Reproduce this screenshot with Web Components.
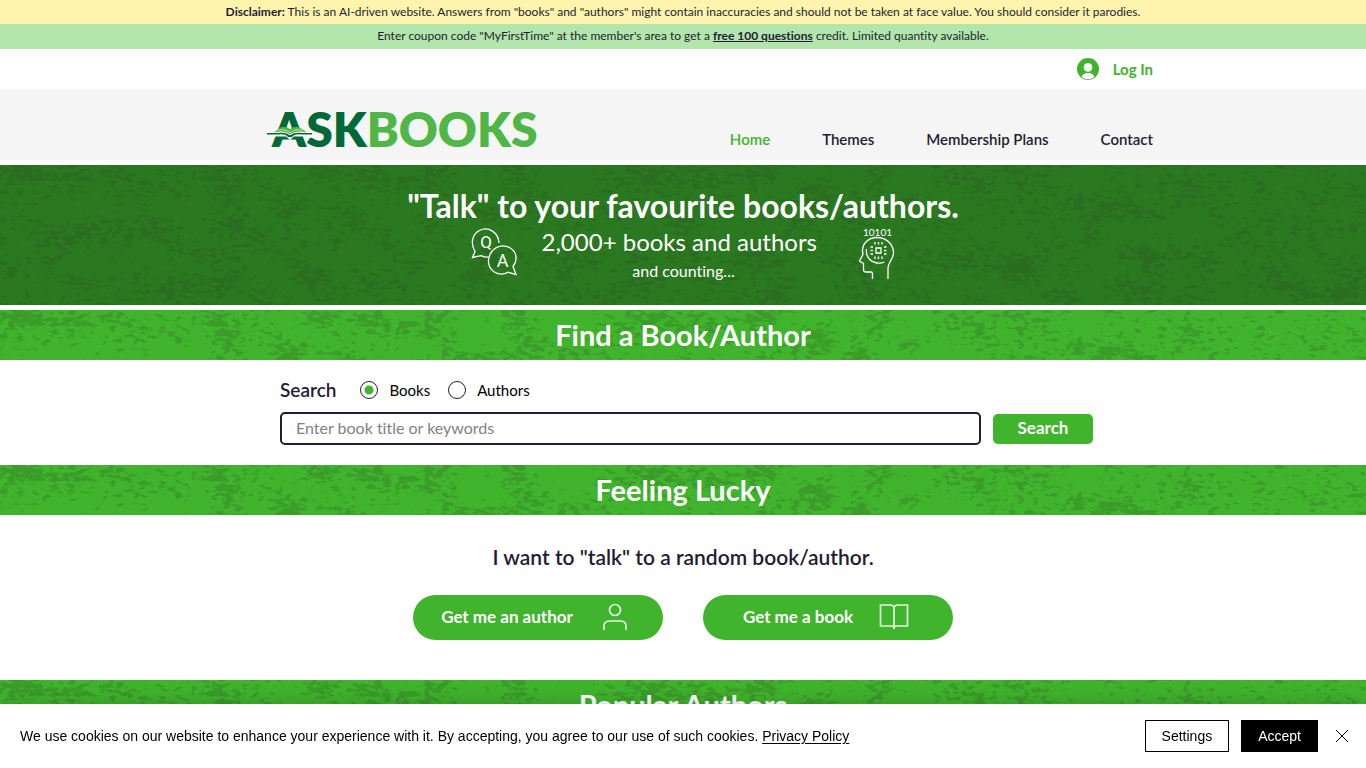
<!DOCTYPE html>
<html lang="en">
<head>
<meta charset="utf-8">
<meta name="viewport" content="width=device-width, initial-scale=1">
<title>AskBooks</title>
<style>
    body {
        margin: 0;
        background: #fff;
        color: #241c34;
        font-family: Lato, "Open Sans", sans-serif;
        font-variant-ligatures: none;
        --green: #40b42d;
        --ink: #241c34;
    }
</style>
</head>
<body>
<ask-page></ask-page>

<script>
class NoticeBar extends HTMLElement {
    connectedCallback() {
        this.attachShadow({ mode: 'open' });
        this.shadowRoot.innerHTML = `
            <style>
                :host {
                    display: block;
                    padding: 0 16px;
                    background: #fff4ae;
                    font-size: 12px;
                    font-weight: 400;
                    line-height: 24px;
                    text-align: center;
                }
                :host([tone="green"]) { padding-bottom: 1px; background: #b2e6aa; }
                ::slotted(strong), ::slotted(a) { font-weight: 700; color: inherit; }
            </style>
            <slot></slot>
        `;
    }
}

class LoginBar extends HTMLElement {
    connectedCallback() {
        this.attachShadow({ mode: 'open' });
        this.shadowRoot.innerHTML = `
            <style>
                :host { display: block; }
                .inner {
                    box-sizing: border-box;
                    max-width: 980px;
                    height: 40px;
                    margin: 0 auto;
                    padding: 0 20px;
                    display: flex;
                    justify-content: flex-end;
                    align-items: center;
                }
                button {
                    display: flex;
                    align-items: center;
                    gap: 14px;
                    padding: 0;
                    border: 0;
                    background: none;
                    color: var(--green);
                    font: 700 15px/20px Lato, sans-serif;
                    cursor: pointer;
                }
            </style>
            <div class="inner">
                <button type="button">
                    <svg width="22" height="22" viewBox="0 0 22 22" aria-hidden="true">
                        <circle cx="11" cy="11" r="11" fill="#40b42d"/>
                        <circle cx="11" cy="9.4" r="4.3" fill="#fff"/>
                        <path d="M4.600 18.900C5.600 15.800 8 14.900 11 14.900s5.400.9 6.400 4C15.500 20.400 13.300 21.200 11 21.200s-4.500-.8-6.400-2.300z" fill="#fff"/>
                    </svg>
                    Log In
                </button>
            </div>
        `;
    }
}

class SiteLogo extends HTMLElement {
    connectedCallback() {
        this.attachShadow({ mode: 'open' });
        this.shadowRoot.innerHTML = `
            <style>
                :host { display: block; }
                a { display: block; height: 40px; }
                svg { display: block; overflow: visible; }
                text { font: 800 48px Lato, sans-serif; }
            </style>
            <a href="#" aria-label="AskBooks home">
                <svg width="271" height="40" viewBox="0 0 271 40">
                    <text x="5" y="38" fill="#006937">ASK<tspan fill="#50b648">BOOKS</tspan></text>
                    <path d="M0 22.500h12c2-3 7-4.500 11-1.500 4-3 9-1.500 11 1.500h11v5H27l-4 3.500-4-3.500H0z" fill="#f5f5f5"/>
                    <path d="M0 24h12c4-.5 8 0 10 2h2c2-2 6-2.500 10-2h11v1.500H34c-4-.5-7 0-9 2.500h-4c-2-2.500-5-3-9-2.500H0z" fill="#006937"/>
                    <path d="M7 23.500 13.500 18.500c4-1 7-.5 9.500 2 2.500-2.500 5.500-3 9.500-2l7.500 5c-6-1.500-13-2-17 2-4-4-10-3.500-16-2z" fill="#50b648"/>
                    <path d="M11 21.500c5-1.500 9-.5 12 2.500 3-3 7-4 12-2.500" fill="none" stroke="#e7f5df" stroke-width=".7"/>
                </svg>
            </a>
        `;
    }
}

class SiteHeader extends HTMLElement {
    connectedCallback() {
        this.attachShadow({ mode: 'open' });
        this.shadowRoot.innerHTML = `
            <style>
                :host { display: block; background: #f5f5f5; }
                .inner {
                    box-sizing: border-box;
                    max-width: 980px;
                    margin: 0 auto;
                    padding: 20px 20px 11px 74px;
                    display: flex;
                    justify-content: space-between;
                    align-items: flex-end;
                }
                nav { display: flex; gap: 52px; }
                a {
                    color: var(--ink);
                    font-size: 15px;
                    font-weight: 600;
                    line-height: 20px;
                    text-decoration: none;
                }
                a[aria-current] { color: var(--green); }
            </style>
            <header class="inner">
                <site-logo></site-logo>
                <nav>
                    <a href="#" aria-current="page">Home</a>
                    <a href="#">Themes</a>
                    <a href="#">Membership Plans</a>
                    <a href="#">Contact</a>
                </nav>
            </header>
        `;
    }
}

// Green strip with a mottled texture behind whatever is slotted in
class TexturedBand extends HTMLElement {
    connectedCallback() {
        this.attachShadow({ mode: 'open' });
        this.shadowRoot.innerHTML = `
            <style>
                :host {
                    display: block;
                    position: relative;
                    overflow: hidden;
                    background: var(--green);
                    color: #fff;
                    text-align: center;
                }
                :host([dark]) { background: #2a7820; }
                .texture { position: absolute; inset: 0; width: 100%; height: 100%; }
                .content { position: relative; }
                ::slotted(h2) {
                    margin: 0;
                    font-size: 29px;
                    font-weight: 700;
                    line-height: 50px;
                }
            </style>
            <svg class="texture" aria-hidden="true">
                <filter id="grain" x="0" y="0" width="100%" height="100%" color-interpolation-filters="sRGB">
                    <feTurbulence type="fractalNoise" baseFrequency=".024 .036" numOctaves="2" seed="5" result="patches"/>
                    <feTurbulence type="fractalNoise" baseFrequency=".12 .24" numOctaves="3" seed="3" result="fine"/>
                    <feComposite in="patches" in2="fine" operator="arithmetic" k2=".45" k3=".55"/>
                    <feColorMatrix values="0 0 0 0 .18  0 0 0 0 .32  0 0 0 0 .16  14 0 0 0 -7.500"/>
                    <feColorMatrix values="0 0 0 0 .16  0 0 0 0 .28  0 0 0 0 .12  0 0 0 .22 0"/>
                </filter>
                <rect width="100%" height="100%" filter="url(#grain)"/>
            </svg>
            <div class="content"><slot></slot></div>
        `;
    }
}

class HeroIntro extends HTMLElement {
    connectedCallback() {
        this.attachShadow({ mode: 'open' });
        this.shadowRoot.innerHTML = `
            <style>
                :host { display: block; box-sizing: border-box; min-height: 140px; padding: 21px 16px 0; }
                h1, p { margin: 0; }
                h1 { font-size: 32px; font-weight: 700; line-height: 40px; }
                .row {
                    display: grid;
                    grid-template-columns: 46px 284px 45px;
                    justify-content: center;
                    column-gap: 24px;
                    align-items: start;
                }
                .count { font-size: 24px; line-height: 32px; text-align: left; }
                .more { font-size: 16px; line-height: 26px; }
                svg { justify-self: end; margin-top: 2px; fill: none; stroke: #fff; stroke-width: 1.3; overflow: visible; }
                svg text { fill: #fff; stroke: none; }
            </style>
            <h1>"Talk" to your favourite books/authors.</h1>
            <div class="row">
                <svg width="46" height="48" viewBox="1 0 46 48" aria-hidden="true">
                    <path d="M17.500 29.200c-3 .1-5-.3-7.500-1.600L1.500 29.500l2.500-6C-1 15 1.500 6 8.500 2.500c9-4.500 19 2 19.500 12.500"/>
                    <path d="M42 38.500l3 8-8-2.300c-7 4-15.500 1-18.500-6-3-7.500 1-16.500 9-19.500 8-2.500 16.500 2 17.500 10 .5 4-.7 7-3 9.800z"/>
                    <text x="15" y="20" text-anchor="middle" font-family="Roboto, sans-serif" font-size="17">Q</text>
                    <text x="31.500" y="38.500" text-anchor="middle" font-family="Roboto, sans-serif" font-size="18">A</text>
                </svg>
                <div>
                    <p class="count">2,000+ books and authors</p>
                    <p class="more">and counting...</p>
                </div>
                <svg width="35" height="52" viewBox="1 1 35 52" aria-hidden="true">
                    <text x="18.500" y="9" text-anchor="middle" font-size="10">10101</text>
                    <path d="M13.500 52v-5.500q0-1.500-1.500-1.500H7q-2.500 0-2.500-2.500v-6L1 34.500q-.5-.5 0-1.500l3-5.500C1.500 17 9.500 10.500 18 10.500c9.500 0 16.500 7 16.500 15.500 0 6-5.500 9-5.500 15.500V52"/>
                    <path d="M7.500 22c-1 8 4 13 10.500 14 3 .5 5 .2 7.500-1"/>
                    <path d="M17 21h5v5h-5zM16 15v2.500M19.500 15v2.500M23 15v2.500M16 29.500V32M19.500 29.500V32M23 29.500V32M11.500 20H14M11.500 23.500H14M11.500 27H14M25 20h2.500M25 23.500h2.500M25 27h2.500"/>
                </svg>
            </div>
        `;
    }
}

class BookSearch extends HTMLElement {
    connectedCallback() {
        this.attachShadow({ mode: 'open' });
        this.shadowRoot.innerHTML = `
            <style>
                :host { display: block; }
                form {
                    box-sizing: border-box;
                    max-width: 846px;
                    margin: 0 auto;
                    padding: 18px 13px 20px 20px;
                }
                .options {
                    display: flex;
                    align-items: center;
                    min-height: 24px;
                    margin-bottom: 10px;
                }
                .title { margin-right: 24px; font-size: 19px; font-weight: 600; line-height: 22px; }
                .choice {
                    display: flex;
                    align-items: center;
                    gap: 11px;
                    margin-right: 18px;
                    color: #000;
                    font-size: 15px;
                    line-height: 24px;
                }
                input[type="radio"] {
                    appearance: none;
                    box-sizing: border-box;
                    width: 18px;
                    height: 18px;
                    margin: 0;
                    border: 1px solid var(--ink);
                    border-radius: 50%;
                }
                input[type="radio"]:checked {
                    background: radial-gradient(circle, var(--green) 4px, transparent 5px);
                }
                .line { display: flex; align-items: center; gap: 12px; }
                .field {
                    box-sizing: border-box;
                    flex: 1;
                    min-width: 0;
                    height: 33px;
                    padding: 0 14px 2px;
                    border: 2px solid var(--ink);
                    border-radius: 5px;
                    color: var(--ink);
                    font: 400 16px Lato, sans-serif;
                    font-variant-ligatures: none;
                }
                .field::placeholder { color: #848089; }
                button {
                    width: 100px;
                    height: 30px;
                    padding: 0 0 2px;
                    border: 0;
                    border-radius: 5px;
                    background: var(--green);
                    color: #fff;
                    font: 700 17px Lato, sans-serif;
                }
            </style>
            <form role="search">
                <div class="options">
                    <label class="title" for="query">Search</label>
                    <label class="choice"><input type="radio" name="kind" value="books" checked>Books</label>
                    <label class="choice"><input type="radio" name="kind" value="authors">Authors</label>
                </div>
                <div class="line">
                    <input class="field" id="query" type="text" placeholder="Enter book title or keywords">
                    <button type="button">Search</button>
                </div>
            </form>
        `;
    }
}

class PillButton extends HTMLElement {
    connectedCallback() {
        this.attachShadow({ mode: 'open' });
        this.shadowRoot.innerHTML = `
            <style>
                :host { display: block; }
                button {
                    display: flex;
                    justify-content: center;
                    align-items: center;
                    gap: 26px;
                    width: 250px;
                    height: 45px;
                    padding: 0 4px 2px 0;
                    border: 0;
                    border-radius: 23px;
                    background: var(--green);
                    color: #fff;
                    font: 700 17px Lato, sans-serif;
                }
            </style>
            <button type="button"><slot></slot><slot name="icon"></slot></button>
        `;
    }
}

class LuckyPick extends HTMLElement {
    connectedCallback() {
        this.attachShadow({ mode: 'open' });
        this.shadowRoot.innerHTML = `
            <style>
                :host { display: block; padding: 28px 16px 40px; text-align: center; }
                p { margin: 0 0 24px; font-size: 21px; font-weight: 600; line-height: 28px; }
                .buttons { display: flex; justify-content: center; gap: 40px; }
                svg { fill: none; stroke: #e2f4df; stroke-width: 1.7; }
            </style>
            <p>I want to "talk" to a random book/author.</p>
            <div class="buttons">
                <pill-button>
                    Get me an author
                    <svg slot="icon" width="32" height="28" viewBox="0 0 32 28" aria-hidden="true">
                        <circle cx="16" cy="7" r="5.500"/>
                        <path d="M5 27v-3.500c0-3.500 2-5.500 5.500-5.500h11c3.500 0 5.500 2 5.500 5.500V27"/>
                    </svg>
                </pill-button>
                <pill-button>
                    Get me a book
                    <svg slot="icon" width="30" height="28" viewBox="0 0 30 28" aria-hidden="true">
                        <path d="M1.500 2H11c2.500 0 4 1.500 4 3.500C15 3.500 16.500 2 19 2h9.500v21H17c-1 0-2 .8-2 3 0-2.200-1-3-2-3H1.500zM15 5v20"/>
                    </svg>
                </pill-button>
            </div>
        `;
    }
}

class CookieBanner extends HTMLElement {
    connectedCallback() {
        this.attachShadow({ mode: 'open' });
        this.shadowRoot.innerHTML = `
            <style>
                :host {
                    position: fixed;
                    right: 0;
                    bottom: 0;
                    left: 0;
                    display: flex;
                    justify-content: space-between;
                    align-items: center;
                    gap: 24px;
                    box-sizing: border-box;
                    min-height: 64px;
                    padding: 16px 12px 16px 20px;
                    background: #fff;
                    box-shadow: 0 0 20px rgba(0, 0, 0, 0.2);
                    color: #000;
                    font: 14px "Liberation Sans", Arial, sans-serif;
                }
                p { margin: 0; }
                a { color: inherit; text-underline-offset: 2px; }
                .actions { display: flex; align-items: center; gap: 12px; }
                button {
                    height: 32px;
                    padding: 0 16px;
                    border: 1px solid #000;
                    background: #fff;
                    color: #000;
                    font: inherit;
                }
                .accept { background: #000; color: #fff; }
                .close { display: flex; align-items: center; padding: 0 4px; border: 0; }
            </style>
            <p>We use cookies on our website to enhance your experience with it. By accepting, you agree to our use of such cookies. <a href="#">Privacy Policy</a></p>
            <div class="actions">
                <button type="button">Settings</button>
                <button type="button" class="accept">Accept</button>
                <button type="button" class="close" aria-label="Close">
                    <svg width="16" height="16" viewBox="0 0 16 16" fill="none" stroke="#000"><path d="M2 2l12 12M14 2L2 14"/></svg>
                </button>
            </div>
        `;
    }
}

class AskPage extends HTMLElement {
    connectedCallback() {
        this.attachShadow({ mode: 'open' });
        this.shadowRoot.innerHTML = `
            <style>
                :host { display: block; }
                .hero { margin: 5px 0; }
            </style>
            <notice-bar><strong>Disclaimer:</strong> This is an AI-driven website. Answers from "books" and "authors" might contain inaccuracies and should not be taken at face value. You should consider it parodies.</notice-bar>
            <notice-bar tone="green">Enter coupon code "MyFirstTime" at the member's area to get a <a href="#">free 100 questions</a> credit. Limited quantity available.</notice-bar>
            <login-bar></login-bar>
            <site-header></site-header>
            <main>
                <textured-band dark class="hero"><hero-intro></hero-intro></textured-band>
                <textured-band><h2>Find a Book/Author</h2></textured-band>
                <book-search></book-search>
                <textured-band><h2>Feeling Lucky</h2></textured-band>
                <lucky-pick></lucky-pick>
                <textured-band><h2>Popular Authors</h2></textured-band>
            </main>
            <cookie-banner></cookie-banner>
        `;
    }
}

customElements.define('notice-bar', NoticeBar);
customElements.define('login-bar', LoginBar);
customElements.define('site-logo', SiteLogo);
customElements.define('site-header', SiteHeader);
customElements.define('textured-band', TexturedBand);
customElements.define('hero-intro', HeroIntro);
customElements.define('book-search', BookSearch);
customElements.define('pill-button', PillButton);
customElements.define('lucky-pick', LuckyPick);
customElements.define('cookie-banner', CookieBanner);
customElements.define('ask-page', AskPage);
</script>
</body>
</html>
